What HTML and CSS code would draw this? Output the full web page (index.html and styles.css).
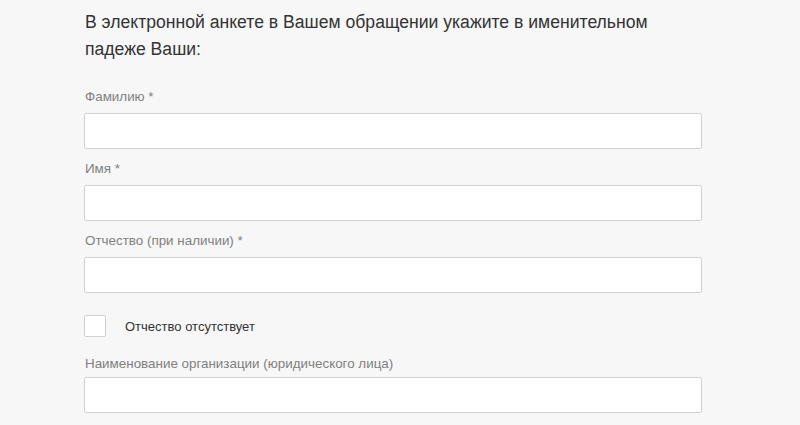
FILE: index.html
```html
<!DOCTYPE html>
<html lang="ru">
<head>
<meta charset="utf-8">
<link rel="stylesheet" href="styles.css">
</head>
<body>
<div class="form">
  <p class="intro">В электронной анкете в Вашем обращении укажите в именительном<br>падеже Ваши:</p>
  <div class="field">
    <label class="label">Фамилию *</label>
    <input class="input" type="text">
  </div>
  <div class="field">
    <label class="label">Имя *</label>
    <input class="input" type="text">
  </div>
  <div class="field">
    <label class="label">Отчество (при наличии) *</label>
    <input class="input" type="text">
  </div>
  <div class="check">
    <span class="box"></span>
    <span class="check-text">Отчество отсутствует</span>
  </div>
  <div class="field org">
    <label class="label">Наименование организации (юридического лица)</label>
    <input class="input" type="text">
  </div>
</div>
</body>
</html>
```
FILE: styles.css
```css
html, body {
  margin: 0;
  padding: 0;
  background: #f7f7f7;
}
body {
  font-family: "Liberation Sans", Arial, sans-serif;
  color: #333;
}
.form {
  width: 618px;
  padding: 9px 0 0 84px;
}
.intro {
  margin: 0 0 24px 1px;
  font-size: 17.6px;
  line-height: 27px;
  color: #333;
}
.field {
  display: flex;
  flex-direction: column;
  margin-bottom: 10px;
}
.label {
  display: block;
  font-size: 13.4px;
  line-height: 20px;
  color: #808080;
  margin: 0 0 6px 1px;
}
.input {
  box-sizing: border-box;
  display: block;
  width: 618px;
  height: 36px;
  margin: 0;
  border: 1px solid #d2d2d2;
  border-radius: 2px;
  background: #fff;
  outline: none;
}
.check {
  display: flex;
  align-items: center;
  margin: 22px 0 17px;
}
.box {
  box-sizing: border-box;
  width: 22px;
  height: 22px;
  border: 1px solid #cfcfcf;
  border-radius: 2px;
  background: #fff;
}
.check-text {
  margin-left: 19px;
  font-size: 13px;
  color: #333;
}
.org .label {
  margin-bottom: 3px;
}
```
